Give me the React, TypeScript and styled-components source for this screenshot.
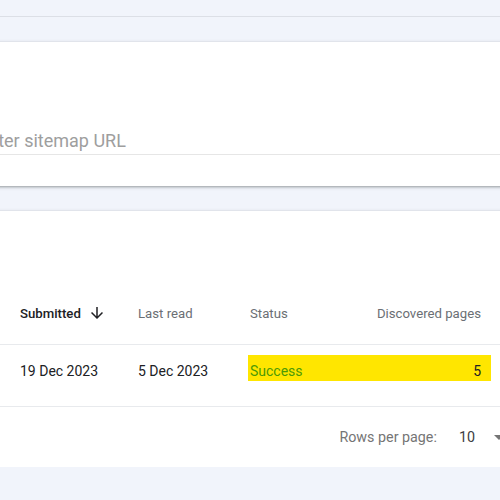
import styled, { createGlobalStyle } from 'styled-components';

const GlobalStyle = createGlobalStyle`
  html, body {
    margin: 0;
    padding: 0;
    background: #f1f4fb;
    overflow: hidden;
  }
  body {
    font-family: Roboto, 'Liberation Sans', Arial, sans-serif;
    -webkit-font-smoothing: antialiased;
  }
`;

const TopBar = styled.div`
  height: 16px;
  border-bottom: 1px solid #dcdfe6;
`;

const Page = styled.main`
  width: 540px;
  margin-left: -30px;
  padding-top: 25px;
  display: flex;
  flex-direction: column;
  gap: 25px;
`;

const Card = styled.section`
  background: #fff;
  box-shadow: 0 1px 2px rgba(60, 64, 67, 0.35), 0 1px 3px 1px rgba(60, 64, 67, 0.15);
`;

const SubmitCard = styled(Card)`
  height: 144px;
  padding-top: 86px;
  box-sizing: border-box;
`;

const Field = styled.div`
  border-bottom: 1px solid #e6e6e6;
  padding: 0 0 2px 8px;
`;

const UrlInput = styled.input`
  width: 100%;
  box-sizing: border-box;
  border: 0;
  outline: none;
  padding: 0;
  height: 24px;
  font-family: inherit;
  font-size: 18px;
  color: #202124;
  background: transparent;

  &::placeholder {
    color: #9e9e9e;
  }
`;

const TableCard = styled(Card)`
  padding-top: 92px;
`;

const Row = styled.div<{ $header?: boolean }>`
  display: grid;
  grid-template-columns: 118px 112px 1fr auto;
  align-items: center;
  padding: ${(p) => (p.$header ? '0 29px 21px 50px' : '10px 29px 25px 50px')};
  border-bottom: 1px solid #e8eaed;
`;

const HeadCell = styled.div<{ $active?: boolean; $right?: boolean }>`
  display: flex;
  align-items: center;
  gap: 7px;
  height: 20px;
  font-size: 13.2px;
  font-weight: ${(p) => (p.$active ? 500 : 400)};
  color: ${(p) => (p.$active ? '#202124' : '#6b6f74')};
  justify-content: ${(p) => (p.$right ? 'flex-end' : 'flex-start')};
`;

const Cell = styled.div`
  font-size: 14px;
  color: #202124;
  height: 26px;
  box-sizing: border-box;
  padding-top: 6px;
  line-height: 20px;
`;

const Highlight = styled.div`
  grid-column: 3 / 5;
  display: flex;
  justify-content: space-between;
  background: #ffe600;
  height: 26px;
  box-sizing: border-box;
  margin: 0 -10px 0 -2px;
  padding: 6px 10px 0 2px;
  line-height: 20px;
  font-size: 14px;
`;

const StatusText = styled.span`
  color: #4d9a06;
`;

const Count = styled.span`
  color: #202124;
`;

const Footer = styled.div`
  height: 60px;
  display: flex;
  align-items: center;
  justify-content: flex-end;
  margin-right: -1px;
  font-size: 14.3px;
  color: #757575;
`;

const PerPage = styled.span`
  margin-right: 22px;
`;

const PageSize = styled.span`
  color: #3c4043;
  margin-right: 12px;
`;

const SortDown = () => (
  <svg width="18" height="18" viewBox="0 0 24 24" fill="#202124">
    <path d="M20 12l-1.41-1.41L13 16.17V4h-2v12.17l-5.58-5.59L4 12l8 8 8-8z" />
  </svg>
);

const DropDown = () => (
  <svg width="24" height="24" viewBox="0 0 24 24" fill="#757575">
    <path d="M7 10l5 5 5-5z" />
  </svg>
);

export default function App() {
  return (
    <>
      <GlobalStyle />
      <TopBar />
      <Page>
        <SubmitCard>
          <Field>
            <UrlInput placeholder="Enter sitemap URL" />
          </Field>
        </SubmitCard>

        <TableCard>
          <Row $header>
            <HeadCell $active>
              Submitted <SortDown />
            </HeadCell>
            <HeadCell>Last read</HeadCell>
            <HeadCell>Status</HeadCell>
            <HeadCell $right>Discovered pages</HeadCell>
          </Row>
          <Row>
            <Cell>19 Dec 2023</Cell>
            <Cell>5 Dec 2023</Cell>
            <Highlight>
              <StatusText>Success</StatusText>
              <Count>5</Count>
            </Highlight>
          </Row>
          <Footer>
            <PerPage>Rows per page:</PerPage>
            <PageSize>10</PageSize>
            <DropDown />
          </Footer>
        </TableCard>
      </Page>
    </>
  );
}
